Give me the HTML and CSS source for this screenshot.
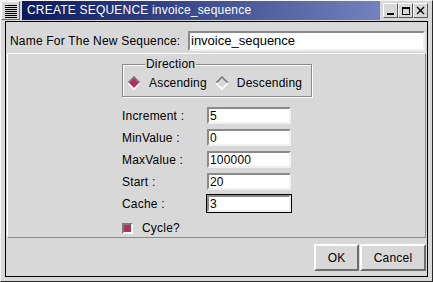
FILE: index.html
```html
<!DOCTYPE html>
<html lang="en">
<head>
    <meta charset="UTF-8">
    <title>CREATE SEQUENCE invoice_sequence</title>
    <link rel="stylesheet" href="styles.css">
</head>
<body>

    <div class="window">
        <div class="titlebar">
            <div class="menu-btn"></div>
            <div class="title">CREATE SEQUENCE invoice_sequence</div>
            <div class="ctrl">
                <svg width="9" height="9" viewBox="0 0 9 9"><rect x="1" y="7" width="7" height="2" fill="#000"/></svg>
            </div>
            <div class="ctrl">
                <svg width="9" height="9" viewBox="0 0 9 9"><rect x="1.5" y="1.5" width="7" height="7" fill="none" stroke="#000"/><rect x="1" y="1" width="8" height="2" fill="#000"/></svg>
            </div>
            <div class="ctrl">
                <svg width="9" height="9" viewBox="0 0 9 9"><path d="M1 1 L8 8 M8 1 L1 8" stroke="#000" stroke-width="1.4"/></svg>
            </div>
        </div>

        <div class="client">
            <div class="name-row">
                <label for="seqName">Name For The New Sequence:</label>
                <input type="text" id="seqName" class="field name-field" value="invoice_sequence">
            </div>

            <div class="panel">
                <div class="form-col">
                    <div class="group">
                        <span class="group-title">Direction</span>
                        <div class="radio">
                            <svg width="14" height="14" viewBox="0 0 14 14">
                                <polygon points="7,1.5 12.5,7 7,12.5 1.5,7" fill="#b03060"/>
                                <polyline points="1,7 7,1 13,7" fill="none" stroke="#7a7a7a" stroke-width="1.6"/>
                                <polyline points="1,7 7,13 13,7" fill="none" stroke="#ffffff" stroke-width="1.6"/>
                            </svg>
                            <span>Ascending</span>
                        </div>
                        <div class="radio">
                            <svg width="14" height="14" viewBox="0 0 14 14">
                                <polygon points="7,1.5 12.5,7 7,12.5 1.5,7" fill="#d8d8d8"/>
                                <polyline points="1,7 7,1 13,7" fill="none" stroke="#7a7a7a" stroke-width="1.6"/>
                                <polyline points="1,7 7,13 13,7" fill="none" stroke="#ffffff" stroke-width="1.6"/>
                            </svg>
                            <span>Descending</span>
                        </div>
                    </div>

                    <div class="fields">
                        <label>Increment :</label>
                        <input type="text" class="field" value="5">
                        <label>MinValue :</label>
                        <input type="text" class="field" value="0">
                        <label>MaxValue :</label>
                        <input type="text" class="field" value="100000">
                        <label>Start :</label>
                        <input type="text" class="field" value="20">
                        <label>Cache :</label>
                        <input type="text" class="field focused" value="3">
                    </div>

                    <div class="cycle">
                        <span class="check"></span>
                        <span>Cycle?</span>
                    </div>
                </div>
            </div>

            <div class="buttons">
                <button class="btn ok">OK</button>
                <button class="btn cancel">Cancel</button>
            </div>
        </div>
    </div>

</body>
</html>
```

FILE: styles.css
```css
/* Page */
body {
    margin: 0;
    padding: 0;
    font-family: "Liberation Sans", Arial, sans-serif;
    font-size: 12px;
    letter-spacing: 0.2px;
    color: black;
    background-color: #d8d8d8;
}

/* Window frame */
.window {
    width: 433px;
    height: 282px;
    box-sizing: border-box;
    border: 1px solid;
    border-color: #f4f4f4 #2a2a2a #2a2a2a #f4f4f4;
    background-color: #d8d8d8;
    display: flex;
    flex-direction: column;
}

.titlebar {
    height: 19px;
    display: flex;
    align-items: stretch;
    padding-right: 3px;
}

.menu-btn {
    width: 19px;
    box-sizing: border-box;
    border: 1px solid;
    border-color: #ffffff #6e6e6e #6e6e6e #ffffff;
    background:
        repeating-linear-gradient(to bottom, #000 0, #000 1px, transparent 1px, transparent 2px)
        3px 3px / 12px 13px no-repeat,
        #d8d8d8;
}

.title {
    width: 358px;
    margin-left: 2px;
    margin-right: 3px;
    padding-left: 5px;
    box-sizing: border-box;
    background: linear-gradient(to right, #0b1a5e, #7282bd);
    color: white;
    font-size: 12px;
    line-height: 19px;
    white-space: nowrap;
}

.ctrl {
    width: 15px;
    height: 15px;
    margin-top: 2px;
    box-sizing: border-box;
    border: 1px solid;
    border-color: #ffffff #5a5a5a #5a5a5a #ffffff;
    display: flex;
    justify-content: center;
    align-items: center;
}

/* Client area */
.client {
    flex: 1;
    margin: 1px 4px 4px 4px;
    border: 1px solid black;
    display: flex;
    flex-direction: column;
}

.name-row {
    display: flex;
    align-items: center;
    padding: 6px 2px 0 4px;
    height: 25px;
}

.name-row label {
    width: 178px;
}

.field {
    box-sizing: border-box;
    height: 17px;
    margin: 0;
    padding: 0 0 0 1px;
    border: 2px solid;
    border-color: #8a8a8a #f0f0f0 #f0f0f0 #8a8a8a;
    background-color: white;
    font-family: "Liberation Sans", Arial, sans-serif;
    font-size: 12px;
    letter-spacing: 0.2px;
    color: black;
    outline: none;
}

.name-field {
    flex: 1;
    height: 20px;
    font-size: 13px;
    letter-spacing: 0;
}

.field.focused {
    outline: 1px solid black;
}

/* Middle panel */
.panel {
    height: 185px;
    box-sizing: border-box;
    margin: 0 1px;
    border-top: 1px solid #ffffff;
    border-left: 1px solid #ffffff;
    border-bottom: 1px solid #8a8a8a;
    border-right: 1px solid #8a8a8a;
    display: flex;
    justify-content: center;
}

.form-col {
    width: 190px;
    padding-left: 1px;
}

.group {
    position: relative;
    height: 33px;
    box-sizing: border-box;
    margin-top: 10px;
    border: 1px solid #8a8a8a;
    box-shadow: inset 1px 1px 0 #ffffff, 1px 1px 0 #ffffff;
    display: flex;
    align-items: center;
    gap: 8px;
    padding: 5px 0 0 4px;
}

.group-title {
    position: absolute;
    top: -8px;
    left: 22px;
    padding: 0 1px;
    background-color: #d8d8d8;
    line-height: 14px;
}

.radio {
    display: flex;
    align-items: center;
    gap: 8px;
}

.fields {
    display: grid;
    grid-template-columns: 85px 84px;
    grid-auto-rows: 17px;
    row-gap: 5px;
    align-items: center;
    margin-top: 10px;
}

.cycle {
    display: flex;
    align-items: center;
    gap: 9px;
    margin-top: 9px;
}

.check {
    width: 11px;
    height: 11px;
    box-sizing: border-box;
    border: 2px solid;
    border-color: #7a7a7a #ffffff #ffffff #7a7a7a;
    background-color: #b03060;
}

/* Dialog buttons */
.buttons {
    display: flex;
    justify-content: flex-end;
    gap: 1px;
    padding: 6px 1px 0 0;
}

.btn {
    height: 27px;
    box-sizing: border-box;
    border: 2px solid;
    border-color: #ffffff #6e6e6e #6e6e6e #ffffff;
    background-color: #d8d8d8;
    font-family: "Liberation Sans", Arial, sans-serif;
    font-size: 12px;
    letter-spacing: 0.2px;
    color: black;
    padding: 0;
}

.ok {
    width: 45px;
}

.cancel {
    width: 66px;
}
```
